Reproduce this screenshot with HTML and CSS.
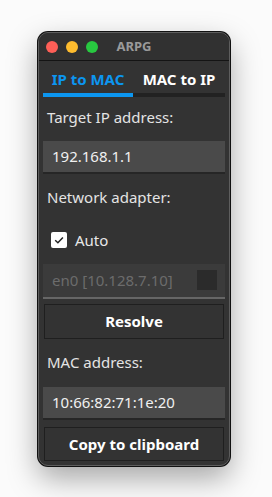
FILE: index.html
```html
<!DOCTYPE html>
<html lang="en">
<head>
    <meta charset="UTF-8">
    <meta name="viewport" content="width=device-width, initial-scale=1.0">
    <title>ARPG</title>
    <link rel="stylesheet" href="styles.css">
</head>
<body>
    <div class="window">
        <div class="titlebar">
            <div class="lights">
                <span class="light red"></span>
                <span class="light yellow"></span>
                <span class="light green"></span>
            </div>
            <div class="title">ARPG</div>
        </div>

        <div class="tabs">
            <div class="tab active">IP to MAC</div>
            <div class="tab">MAC to IP</div>
        </div>

        <div class="content">
            <div class="label first">Target IP address:</div>
            <div class="field">192.168.1.1</div>

            <div class="label">Network adapter:</div>
            <div class="check-row">
                <span class="checkbox">
                    <svg width="12" height="12" viewBox="0 0 12 12">
                        <path d="M2.2 6.2 L4.9 8.8 L9.9 3.4" fill="none" stroke="#222" stroke-width="1.5"/>
                    </svg>
                </span>
                <span class="check-text">Auto</span>
            </div>
            <div class="combo">
                <span>en0 [10.128.7.10]</span>
                <span class="combo-btn"></span>
            </div>
            <div class="btn">Resolve</div>

            <div class="label">MAC address:</div>
            <div class="field">10:66:82:71:1e:20</div>
            <div class="btn copy">Copy to clipboard</div>
        </div>
    </div>
</body>
</html>
```

FILE: styles.css
```css
html {
    background-color: #fbfbfb;
}
body {
    margin: 0;
    min-height: 497px;
    box-sizing: border-box;
    padding: 32px 0 0 38px;
    font-family: "Noto Sans", sans-serif;
}
.window {
    width: 192px;
    height: 434px;
    box-sizing: border-box;
    background: #333333;
    border: 1px solid #5e5e5e;
    border-radius: 10px;
    box-shadow: 0 0 0 1px #111, 0 12px 30px rgba(0, 0, 0, 0.35);
    overflow: hidden;
}
.titlebar {
    height: 27px;
    position: relative;
    background: #313131;
    border-bottom: 1px solid #141414;
}
.lights {
    display: flex;
    gap: 8px;
    padding: 8px 0 0 7px;
}
.light {
    width: 12px;
    height: 12px;
    border-radius: 50%;
}
.red {
    background: #fe5f57;
}
.yellow {
    background: #febc2e;
}
.green {
    background: #28c840;
}
.title {
    position: absolute;
    top: 0;
    left: 0;
    right: 0;
    line-height: 27px;
    text-align: center;
    color: #9a9a9a;
    font-size: 13px;
    font-weight: bold;
}
.tabs {
    display: flex;
    margin: 0 4px;
    height: 36px;
}
.tab {
    flex: 1;
    box-sizing: border-box;
    padding-top: 5px;
    text-align: center;
    color: #fff;
    font-size: 15px;
    font-weight: bold;
    line-height: 26px;
    border-bottom: 4px solid #222;
}
.tab.active {
    flex: 0 0 90px;
    color: #0c96f0;
    border-bottom-color: #0c96f0;
}
.content {
    padding: 0 4px;
}
.label {
    padding: 12px 4px 0;
    height: 48px;
    box-sizing: border-box;
    line-height: 22px;
    color: #e4e4e4;
    font-size: 15px;
}
.label.first {
    padding-top: 9px;
    height: 44px;
}
.field {
    height: 33px;
    box-sizing: border-box;
    background: #4a4a4a;
    border-bottom: 2px solid #262626;
    padding-left: 9px;
    line-height: 31px;
    color: #f0f0f0;
    font-size: 15px;
}
.check-row {
    display: flex;
    align-items: center;
    height: 44px;
    padding-left: 8px;
    margin-top: -4px;
}
.checkbox {
    width: 16px;
    height: 16px;
    background: #fff;
    border-radius: 2px;
    display: flex;
    align-items: center;
    justify-content: center;
}
.check-text {
    margin-left: 8px;
    color: #e8e8e8;
    font-size: 15px;
}
.combo {
    margin-top: 2px;
    height: 35px;
    box-sizing: border-box;
    background: #3b3b3b;
    border-bottom: 2px solid #666;
    display: flex;
    align-items: center;
    justify-content: space-between;
    padding: 0 8px 2px 9px;
    color: #6c6c6c;
    font-size: 15px;
}
.combo-btn {
    width: 20px;
    height: 20px;
    background: #2b2b2b;
}
.btn {
    margin: 5px 1px 0;
    height: 35px;
    box-sizing: border-box;
    border: 1px solid #1f1f1f;
    background: #333;
    text-align: center;
    line-height: 33px;
    color: #fff;
    font-size: 15px;
    font-weight: bold;
}
.btn.copy {
    margin-top: 7px;
    height: 34px;
    line-height: 32px;
}
```
